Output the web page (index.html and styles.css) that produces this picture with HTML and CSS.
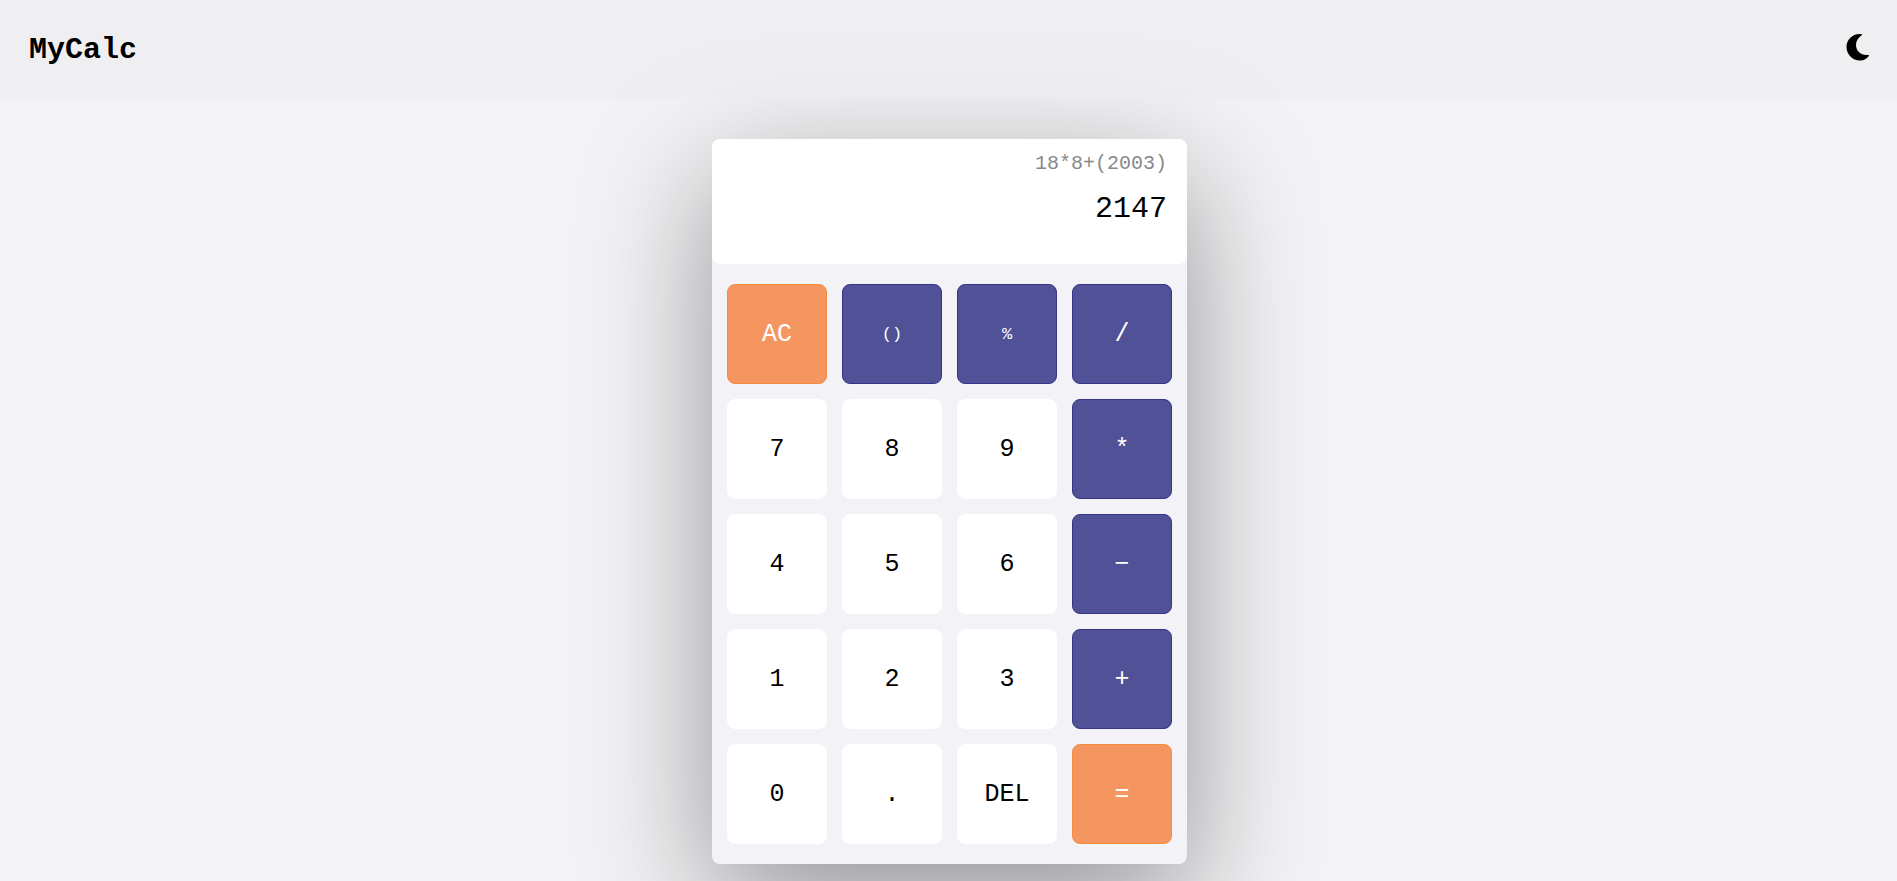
FILE: index.html
```html
<!DOCTYPE html>
<html lang="en">
<head>
<meta charset="utf-8">
<title>MyCalc</title>
<link rel="stylesheet" href="styles.css">
</head>
<body>
<main class="page">
  <section class="calculator" aria-label="Calculator">
    <div class="screen">
      <output class="expression">18*8+(2003)</output>
      <output class="result">2147</output>
    </div>
    <div class="keypad">
      <button class="key key-accent">AC</button>
      <button class="key key-operator key-small">()</button>
      <button class="key key-operator key-small">%</button>
      <button class="key key-operator">/</button>
      <button class="key">7</button>
      <button class="key">8</button>
      <button class="key">9</button>
      <button class="key key-operator">*</button>
      <button class="key">4</button>
      <button class="key">5</button>
      <button class="key">6</button>
      <button class="key key-operator">−</button>
      <button class="key">1</button>
      <button class="key">2</button>
      <button class="key">3</button>
      <button class="key key-operator">+</button>
      <button class="key">0</button>
      <button class="key">.</button>
      <button class="key">DEL</button>
      <button class="key key-accent">=</button>
    </div>
  </section>
</main>
<header class="header">
  <h1 class="brand">MyCalc</h1>
  <button class="theme-toggle" aria-label="Switch to dark theme">
    <svg class="moon" viewBox="0 0 24 28" aria-hidden="true"><path d="M14 1C5.500 1 0.500 7.500 0.500 14C0.500 21.500 6.500 27.500 14 27.500C18 27.500 21 25.500 22.800 23C23.200 22.300 22.900 21.800 22.200 21.900C15 22.800 10 18 10 12C10 8 12.300 4.500 15.600 2.300C16.300 1.800 16 1.100 15.300 1Z"/></svg>
  </button>
</header>
</body>
</html>
```

FILE: styles.css
```css
* {
  box-sizing: border-box;
}

body {
  margin: 0;
  display: flex;
  flex-direction: column;
  height: 100vh;
  overflow: hidden;
  background: #f3f3f5;
  color: #000;
  font-family: "Courier New", "Liberation Mono", monospace;
}

.header {
  order: -1;
  z-index: 1;
  flex: none;
  display: flex;
  justify-content: space-between;
  align-items: center;
  padding: 33px 27px 32px 29px;
  background: rgba(236, 236, 239, 0.7);
}

.brand {
  margin: 0;
  font-size: 30px;
  line-height: 34px;
  font-weight: 700;
}

.theme-toggle {
  display: flex;
  padding: 0 0 6px;
  border: 0;
  background: none;
}

.moon {
  width: 24px;
  height: 28px;
}

.page {
  display: flex;
  justify-content: center;
  padding: 40px 16px 16px 18px;
}

.calculator {
  border-radius: 8px;
  background: #f2f2f7;
  box-shadow: 0 40px 130px rgba(0, 0, 8, 0.4);
}

.screen {
  display: flex;
  flex-direction: column;
  align-items: flex-end;
  gap: 16px;
  height: 125px;
  padding: 13px 20px 12px;
  border-radius: 8px;
  background: #fff;
}

.expression {
  font-size: 20px;
  line-height: 24px;
  color: #888;
}

.result {
  font-size: 30px;
  line-height: 34px;
}

.keypad {
  display: grid;
  grid-template-columns: repeat(4, 100px);
  grid-auto-rows: 100px;
  gap: 15px;
  padding: 20px 15px;
}

.key {
  padding: 0;
  border: 1px solid #fff;
  border-radius: 8px;
  background: #fff;
  color: #000;
  font-family: inherit;
  font-size: 25px;
}

.key-operator {
  border-color: #35358a;
  background: #515197;
  color: #fff;
}

.key-accent {
  border-color: #f68a3e;
  background: #f59560;
  color: #fff;
}

.key-small {
  font-size: 17px;
}
```
